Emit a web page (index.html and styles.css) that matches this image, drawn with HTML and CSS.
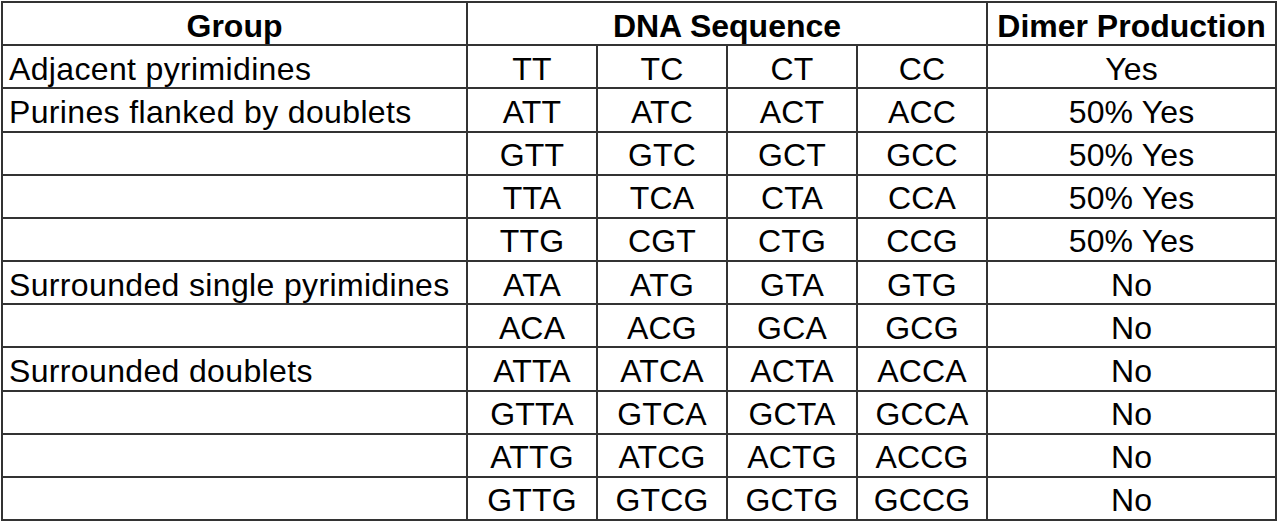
FILE: index.html
```html
<!DOCTYPE html>
<html>
<head>
<meta charset="utf-8">
<link rel="stylesheet" href="styles.css">
</head>
<body>
<div class="table">
  <div class="cell head">Group</div>
  <div class="cell head span4">DNA Sequence</div>
  <div class="cell head">Dimer Production</div>

  <div class="cell group">Adjacent pyrimidines</div>
  <div class="cell">TT</div><div class="cell">TC</div><div class="cell">CT</div><div class="cell">CC</div>
  <div class="cell">Yes</div>

  <div class="cell group">Purines flanked by doublets</div>
  <div class="cell">ATT</div><div class="cell">ATC</div><div class="cell">ACT</div><div class="cell">ACC</div>
  <div class="cell">50% Yes</div>

  <div class="cell group"></div>
  <div class="cell">GTT</div><div class="cell">GTC</div><div class="cell">GCT</div><div class="cell">GCC</div>
  <div class="cell">50% Yes</div>

  <div class="cell group"></div>
  <div class="cell">TTA</div><div class="cell">TCA</div><div class="cell">CTA</div><div class="cell">CCA</div>
  <div class="cell">50% Yes</div>

  <div class="cell group"></div>
  <div class="cell">TTG</div><div class="cell">CGT</div><div class="cell">CTG</div><div class="cell">CCG</div>
  <div class="cell">50% Yes</div>

  <div class="cell group">Surrounded single pyrimidines</div>
  <div class="cell">ATA</div><div class="cell">ATG</div><div class="cell">GTA</div><div class="cell">GTG</div>
  <div class="cell">No</div>

  <div class="cell group"></div>
  <div class="cell">ACA</div><div class="cell">ACG</div><div class="cell">GCA</div><div class="cell">GCG</div>
  <div class="cell">No</div>

  <div class="cell group">Surrounded doublets</div>
  <div class="cell">ATTA</div><div class="cell">ATCA</div><div class="cell">ACTA</div><div class="cell">ACCA</div>
  <div class="cell">No</div>

  <div class="cell group"></div>
  <div class="cell">GTTA</div><div class="cell">GTCA</div><div class="cell">GCTA</div><div class="cell">GCCA</div>
  <div class="cell">No</div>

  <div class="cell group"></div>
  <div class="cell">ATTG</div><div class="cell">ATCG</div><div class="cell">ACTG</div><div class="cell">ACCG</div>
  <div class="cell">No</div>

  <div class="cell group"></div>
  <div class="cell">GTTG</div><div class="cell">GTCG</div><div class="cell">GCTG</div><div class="cell">GCCG</div>
  <div class="cell">No</div>
</div>
</body>
</html>
```
FILE: styles.css
```css
html, body {
  margin: 0;
  padding: 0;
  background: #fff;
}
body {
  padding: 1px 0 0 1px;
}
.table {
  display: grid;
  grid-template-columns: 463px 128px 128px 128px 128px 287px;
  grid-template-rows: repeat(12, 1fr);
  gap: 2px;
  padding: 2px;
  width: 1276px;
  height: 520px;
  box-sizing: border-box;
  background: #333;
  font-family: "Liberation Sans", Arial, sans-serif;
  font-size: 32px;
  color: #000;
}
.cell {
  background: #fff;
  display: flex;
  align-items: center;
  justify-content: center;
  padding-top: 4px;
  line-height: 1;
  white-space: nowrap;
  letter-spacing: 0.15px;
}
.head {
  font-weight: bold;
  letter-spacing: 0;
}
.span4 {
  grid-column: span 4;
}
.group {
  justify-content: flex-start;
  padding-left: 6px;
  letter-spacing: 0.35px;
}
```
